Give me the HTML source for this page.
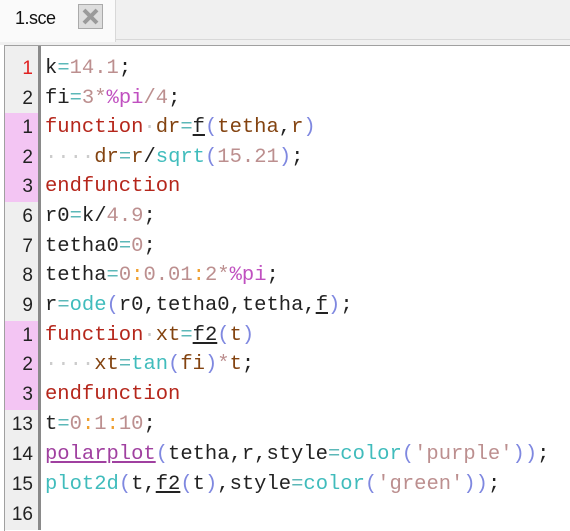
<!DOCTYPE html>
<html><head><style>
body{margin:0;width:570px;height:530px;background:#fff;overflow:hidden;position:relative;font-family:"Liberation Sans",sans-serif}
.tabbar{position:absolute;left:0;top:0;width:570px;height:45px;background:#f0f0f0}
.tab{position:absolute;left:0;top:0;width:115px;height:42px;background:#fafafa;border-right:1px solid #d8d8d8}
.tabline{position:absolute;left:115px;top:39px;width:455px;height:1px;background:#d8d8d8}
.tt{position:absolute;left:15px;top:8px;font-size:18px;color:#111;letter-spacing:-0.5px}
.x{position:absolute;left:78px;top:4px;width:25px;height:25px;background:#ddd;border:1px solid #aaa;box-sizing:border-box}
.ed{position:absolute;left:4px;top:45px;width:566px;height:485px;border-top:1px solid #a0a0a0;border-left:1px solid #a0a0a0;background:#fff}
.gut{position:absolute;left:5px;top:46px;width:33px;height:484px;background:#efefef}
.sep{position:absolute;left:38px;top:46px;width:3px;height:484px;background:#8a8a8a}
.pink{position:absolute;left:5px;width:33px;background:#f3c5f3}
.ln{position:absolute;left:5px;width:28px;text-align:right;font-size:19px;color:#222;line-height:30px}
.code{position:absolute;left:45px;font-family:"Liberation Mono",monospace;font-size:20.5px;line-height:30px;white-space:pre;color:#222}
.n{color:#bc8f8f}.o{color:#5cb8b8}.p{color:#c050c0}.k{color:#b5261b}.v{color:#834310}.f{color:#40bcbc}.b{color:#7f88e0}.u{text-decoration:underline}.d{color:#ccc}.pp{color:#a040a0;text-decoration:underline}
</style></head><body>
<div class="tabbar"><div class="tab"><div class="tt">1.sce</div>
<div class="x"><svg width="23" height="23" viewBox="0 0 23 23"><path d="M5 5L18 18M18 5L5 18" stroke="#9a9a9a" stroke-width="4"/></svg></div></div><div class="tabline"></div></div>
<div class="ed"></div>
<div class="gut"></div>
<div class="pink" style="top:113px;height:89px"></div>
<div class="pink" style="top:321px;height:89px"></div>
<div class="sep"></div>
<div class="ln" style="top:54px;color:#e02020">1</div>
<div class="ln" style="top:84px">2</div>
<div class="ln" style="top:113px">1</div>
<div class="ln" style="top:143px">2</div>
<div class="ln" style="top:172px">3</div>
<div class="ln" style="top:202px">6</div>
<div class="ln" style="top:232px">7</div>
<div class="ln" style="top:261px">8</div>
<div class="ln" style="top:291px">9</div>
<div class="ln" style="top:321px">1</div>
<div class="ln" style="top:350px">2</div>
<div class="ln" style="top:380px">3</div>
<div class="ln" style="top:410px">13</div>
<div class="ln" style="top:440px">14</div>
<div class="ln" style="top:470px">15</div>
<div class="ln" style="top:500px">16</div>
<div class="code" style="top:54px">k<span class="o">=</span><span class="n">14.1</span>;</div>
<div class="code" style="top:84px">fi<span class="o">=</span><span class="n">3</span><span class="n">*</span><span class="p">%pi</span><span class="n">/4</span>;</div>
<div class="code" style="top:113px"><span class="k">function</span><span class="d">·</span><span class="v">dr</span><span class="o">=</span><span class="u">f</span><span class="b">(</span><span class="v">tetha</span>,<span class="v">r</span><span class="b">)</span></div>
<div class="code" style="top:143px"><span class="d">····</span><span class="v">dr</span><span class="o">=</span><span class="v">r</span>/<span class="f">sqrt</span><span class="b">(</span><span class="n">15.21</span><span class="b">)</span>;</div>
<div class="code" style="top:172px"><span class="k">endfunction</span></div>
<div class="code" style="top:202px">r0<span class="o">=</span>k/<span class="n">4.9</span>;</div>
<div class="code" style="top:232px">tetha0<span class="o">=</span><span class="n">0</span>;</div>
<div class="code" style="top:261px">tetha<span class="o">=</span><span class="n">0</span><span style="color:#f0a030">:</span><span class="n">0.01</span><span style="color:#f0a030">:</span><span class="n">2</span><span class="n">*</span><span class="p">%pi</span>;</div>
<div class="code" style="top:291px">r<span class="o">=</span><span class="f">ode</span><span class="b">(</span>r0,tetha0,tetha,<span class="u">f</span><span class="b">)</span>;</div>
<div class="code" style="top:321px"><span class="k">function</span><span class="d">·</span><span class="v">xt</span><span class="o">=</span><span class="u">f2</span><span class="b">(</span><span class="v">t</span><span class="b">)</span></div>
<div class="code" style="top:350px"><span class="d">····</span><span class="v">xt</span><span class="o">=</span><span class="f">tan</span><span class="b">(</span><span class="v">fi</span><span class="b">)</span><span class="n">*</span><span class="v">t</span>;</div>
<div class="code" style="top:380px"><span class="k">endfunction</span></div>
<div class="code" style="top:410px">t<span class="o">=</span><span class="n">0</span><span style="color:#f0a030">:</span><span class="n">1</span><span style="color:#f0a030">:</span><span class="n">10</span>;</div>
<div class="code" style="top:440px"><span class="pp">polarplot</span><span class="b">(</span>tetha,r,style<span class="o">=</span><span class="f">color</span><span class="b">(</span><span class="n">'purple'</span><span class="b">))</span>;</div>
<div class="code" style="top:470px"><span class="f">plot2d</span><span class="b">(</span>t,<span class="u">f2</span><span class="b">(</span>t<span class="b">)</span>,style<span class="o">=</span><span class="f">color</span><span class="b">(</span><span class="n">'green'</span><span class="b">))</span>;</div>
</body></html>
